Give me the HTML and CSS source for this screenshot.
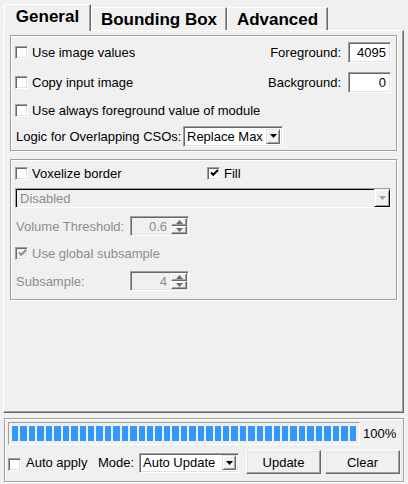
FILE: index.html
```html
<!DOCTYPE html>
<html>
<head>
<meta charset="utf-8">
<link rel="stylesheet" href="styles.css">
</head>
<body>
<div class="tabs">
  <div class="tab tab-active">General</div>
  <div class="tab tab-bb">Bounding Box</div>
  <div class="tab tab-adv">Advanced</div>
</div>
<div class="pane">
  <div class="group g1">
    <div class="row r1">
      <span class="cb"></span><span class="cb-label">Use image values</span>
      <span class="spacer"></span>
      <span class="flabel">Foreground:</span>
      <span class="field">4095</span>
    </div>
    <div class="row r2">
      <span class="cb"></span><span class="cb-label">Copy input image</span>
      <span class="spacer"></span>
      <span class="flabel">Background:</span>
      <span class="field">0</span>
    </div>
    <div class="row r3">
      <span class="cb"></span><span class="cb-label">Use always foreground value of module</span>
    </div>
    <div class="row r4">
      <span class="logic-label">Logic for Overlapping CSOs:</span>
      <span class="combo combo-logic"><span class="combo-text">Replace Max</span><span class="dd"><svg width="7" height="4" viewBox="0 0 7 4"><polygon points="0,0 7,0 3.5,4" fill="#000"/></svg></span></span>
    </div>
  </div>
  <div class="group g2">
    <div class="row ra">
      <span class="cb"></span><span class="cb-label vox-label">Voxelize border</span>
      <span class="cb cb-on"><svg width="9" height="9" viewBox="0 0 9 9"><path d="M1 3.5 L3.2 5.8 L8 1" stroke="#000" stroke-width="2" fill="none"/></svg></span><span class="cb-label">Fill</span>
    </div>
    <div class="row rb">
      <span class="combo-dis"><span class="dis-text">Disabled</span><span class="dd dd-dis"><svg width="7" height="4" viewBox="0 0 7 4"><polygon points="0,0 7,0 3.5,4" fill="#a0a0a0"/></svg></span></span>
    </div>
    <div class="row rc">
      <span class="dis-label">Volume Threshold:</span>
      <span class="spin"><span class="spin-text">0.6</span><span class="spin-btns"><span class="sb"><svg width="7" height="4" viewBox="0 0 7 4"><polygon points="0,4 7,4 3.5,0" fill="#6d6d6d"/></svg></span><span class="sb"><svg width="7" height="4" viewBox="0 0 7 4"><polygon points="0,0 7,0 3.5,4" fill="#6d6d6d"/></svg></span></span></span>
    </div>
    <div class="row rd">
      <span class="cb cb-dis"><svg width="9" height="9" viewBox="0 0 9 9"><path d="M1 3.5 L3.2 5.8 L8 1" stroke="#8d8d8d" stroke-width="2" fill="none"/></svg></span><span class="cb-label dis">Use global subsample</span>
    </div>
    <div class="row re">
      <span class="dis-label">Subsample:</span>
      <span class="spin"><span class="spin-text">4</span><span class="spin-btns"><span class="sb"><svg width="7" height="4" viewBox="0 0 7 4"><polygon points="0,4 7,4 3.5,0" fill="#6d6d6d"/></svg></span><span class="sb"><svg width="7" height="4" viewBox="0 0 7 4"><polygon points="0,0 7,0 3.5,4" fill="#6d6d6d"/></svg></span></span></span>
    </div>
  </div>
</div>
<div class="group bottom">
  <div class="prow">
    <div class="progress"><i></i><i></i><i></i><i></i><i></i><i></i><i></i><i></i><i></i><i></i><i></i><i></i><i></i><i></i><i></i><i></i><i></i><i></i><i></i><i></i><i></i><i></i><i></i><i></i><i></i><i></i><i></i><i></i><i></i><i></i><i></i><i></i><i></i><i></i><i></i><i></i><i></i><i></i><i></i><i></i><i></i></div>
    <span class="pct">100%</span>
  </div>
  <div class="row brow">
    <span class="cb cb-auto"></span><span class="auto-label">Auto apply</span>
    <span class="mode-label">Mode:</span>
    <span class="combo combo-mode"><span class="combo-text">Auto Update</span><span class="dd"><svg width="7" height="4" viewBox="0 0 7 4"><polygon points="0,0 7,0 3.5,4" fill="#000"/></svg></span></span>
    <span class="btn btn-update">Update</span>
    <span class="btn btn-clear">Clear</span>
  </div>
</div>
</body>
</html>
```
FILE: styles.css
```css
html, body {
  margin: 0;
  padding: 0;
}
body {
  width: 408px;
  height: 484px;
  overflow: hidden;
  background: #f0f0f0;
  font-family: "Liberation Sans", Arial, sans-serif;
  font-size: 13px;
  color: #000;
}
* { box-sizing: border-box; }

.tabs {
  display: flex;
  align-items: flex-end;
  height: 30px;
  padding-left: 4px;
  position: relative;
  z-index: 2;
}
.tab {
  height: 23px;
  display: flex;
  align-items: center;
  justify-content: center;
  font-weight: bold;
  font-size: 17px;
  border-top: 1px solid #fff;
  border-left: 1px solid #fff;
  border-right: 1px solid #696969;
  box-shadow: inset -1px 0 0 #a0a0a0;
  padding-top: 1px;
}
.tab-active {
  width: 87px;
  height: 27px;
  margin-bottom: -1px;
  background: #f0f0f0;
  padding-top: 0;
  padding-bottom: 2px;
}
.tab-bb { width: 136px; }
.tab-adv { width: 101px; }

.pane {
  margin-left: 3px;
  width: 401px;
  height: 383px;
  border-top: 1px solid #fff;
  border-left: 1px solid #fff;
  border-right: 1px solid #696969;
  border-bottom: 1px solid #696969;
  box-shadow: inset -1px -1px 0 #a0a0a0;
  padding: 4px 0 0 6px;
}

.group {
  width: 387px;
  border: 1px solid #a0a0a0;
  box-shadow: inset 1px 1px 0 #fff, 1px 1px 0 #fff;
}
.g1 {
  height: 116px;
  padding: 4px 5px 0 4px;
}
.g2 {
  margin-top: 8px;
  height: 141px;
  padding: 5px 5px 0 4px;
}

.row {
  display: flex;
  align-items: center;
}
.r1 { height: 24px; }
.r2 { height: 24px; margin-top: 6px; }
.r3 { height: 24px; margin-top: 4px; }
.r4 { height: 22px; margin-top: 3px; }

.cb {
  width: 13px;
  height: 13px;
  flex: none;
  background: #fff;
  border: 1px solid;
  border-color: #a0a0a0 #fff #fff #a0a0a0;
  box-shadow: inset 1px 1px 0 #696969, inset -1px -1px 0 #e3e3e3;
  display: flex;
  align-items: center;
  justify-content: center;
}
.cb svg { display: block; margin: 1px 0 0 1px; }
.cb-label {
  margin-left: 4px;
  white-space: nowrap;
}
.spacer { flex: 1; }
.flabel {
  margin-right: 7px;
}
.field {
  width: 43px;
  height: 21px;
  background: #fff;
  border: 1px solid;
  border-color: #a0a0a0 #fff #fff #a0a0a0;
  box-shadow: inset 1px 1px 0 #696969, inset -1px -1px 0 #e3e3e3;
  text-align: right;
  padding: 2px 4px 0 0;
  line-height: 16px;
}

.logic-label {
  margin-left: 1px;
  width: 167px;
  white-space: nowrap;
}
.combo {
  display: flex;
  align-items: center;
  background: #fff;
  border: 1px solid;
  border-color: #a0a0a0 #fff #fff #a0a0a0;
  box-shadow: inset 1px 1px 0 #696969, inset -1px -1px 0 #e3e3e3;
  padding: 2px 2px 2px 3px;
}
.combo-logic {
  width: 100px;
  height: 21px;
}
.combo-text {
  flex: 1;
  white-space: nowrap;
  overflow: hidden;
}
.dd {
  width: 14px;
  height: 15px;
  flex: none;
  display: flex;
  align-items: center;
  justify-content: center;
  background: #f0f0f0;
  border: 1px solid;
  border-color: #e3e3e3 #696969 #696969 #e3e3e3;
  box-shadow: inset 1px 1px 0 #fff, inset -1px -1px 0 #a0a0a0;
}
.dd svg { display: block; }

.ra { height: 16px; }
.vox-label { width: 175px; }
.rb { height: 20px; margin-top: 7px; }
.rc { height: 20px; margin-top: 8px; }
.rd { height: 18px; margin-top: 8px; }
.re { height: 20px; margin-top: 9px; }

.combo-dis {
  width: 377px;
  height: 20px;
  display: flex;
  align-items: center;
  background: #f0f0f0;
  border: 1px solid;
  border-color: #a0a0a0 #fff #fff #a0a0a0;
  box-shadow: inset 1px 1px 0 #000;
  padding: 1px 0 0 4px;
}
.dis-text {
  flex: 1;
  color: #8d8d8d;
}
.dd-dis {
  height: 18px;
  width: 16px;
  margin-top: -1px;
  border-color: #f0f0f0 #000 #000 #f0f0f0;
  box-shadow: inset 1px 1px 0 #fff, inset -1px -1px 0 #a0a0a0;
}

.dis-label {
  margin-left: 1px;
  width: 114px;
  color: #8d8d8d;
  white-space: nowrap;
}
.dis { color: #8d8d8d; }
.spin {
  width: 59px;
  height: 20px;
  display: flex;
  align-items: center;
  background: #f0f0f0;
  border: 1px solid;
  border-color: #a0a0a0 #fff #fff #a0a0a0;
  box-shadow: inset 1px 1px 0 #696969, inset -1px -1px 0 #e3e3e3;
  padding: 1px 1px 1px 2px;
}
.spin-text {
  flex: 1;
  text-align: right;
  color: #8d8d8d;
  padding-right: 4px;
}
.spin-btns {
  width: 16px;
  height: 16px;
  display: flex;
  flex-direction: column;
}
.sb {
  flex: 1;
  display: flex;
  align-items: center;
  justify-content: center;
  border: 1px solid;
  border-color: #fff #696969 #696969 #fff;
  box-shadow: inset -1px -1px 0 #a0a0a0;
  background: #f0f0f0;
}
.sb svg { display: block; }
.cb-dis {
  background: #f0f0f0;
}

.bottom {
  margin-top: 5px;
  margin-left: 4px;
  width: 400px;
  height: 64px;
  padding: 3px 3px 0 3px;
}
.prow {
  display: flex;
  align-items: center;
  height: 23px;
}
.progress {
  width: 352px;
  height: 23px;
  display: flex;
  gap: 2px;
  padding: 3px 3px 3px 3px;
  background: #f0f0f0;
  border: 1px solid;
  border-color: #a0a0a0 #fff #fff #a0a0a0;
}
.progress i {
  flex: 1;
  background: #3399ff;
}
.pct {
  margin-left: 3px;
}
.brow {
  height: 24px;
  margin-top: 5px;
}
.cb-auto { margin-top: 5px; }
.auto-label {
  margin-left: 5px;
  width: 72px;
  white-space: nowrap;
}
.mode-label {
  width: 41px;
}
.combo-mode {
  width: 100px;
  height: 20px;
  margin-top: 1px;
}
.btn {
  width: 75px;
  height: 24px;
  display: flex;
  align-items: center;
  justify-content: center;
  background: #f0f0f0;
  border: 1px solid;
  border-color: #fff #696969 #696969 #fff;
  box-shadow: inset -1px -1px 0 #a0a0a0, inset 1px 1px 0 #e3e3e3;
}
.btn-update { margin-left: 7px; }
.btn-clear { margin-left: 4px; }
```
